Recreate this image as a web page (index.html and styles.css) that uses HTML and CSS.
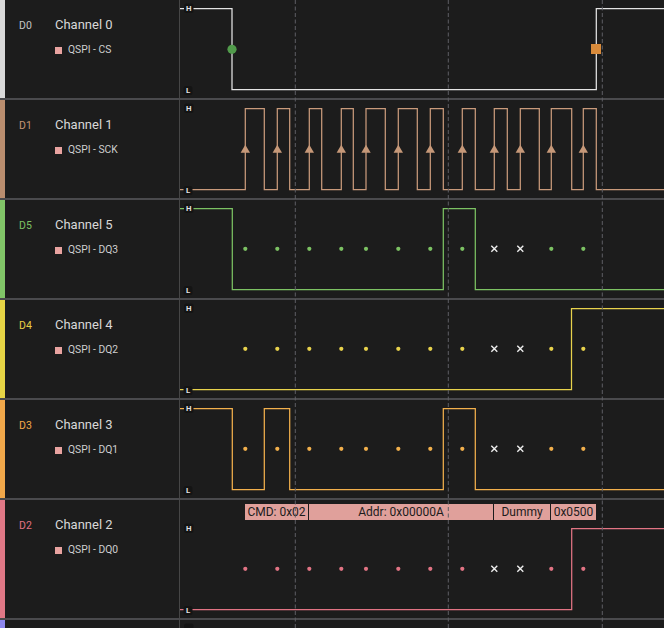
FILE: index.html
```html
<!DOCTYPE html>
<html>
<head>
<meta charset="utf-8">
<link rel="stylesheet" href="styles.css">
</head>
<body>
<div class="rows">
  <div class="row">
    <div class="info"><span class="bar c-d0"></span>
      <div class="names">
        <span class="dn t-d0">D0</span><span class="ch">Channel 0</span>
        <span></span><span class="proto"><i class="sw"></i>QSPI - CS</span>
      </div>
    </div>
    <div class="wave">
      <svg class="wv" viewBox="180 0 484 98" width="484" height="98">
        <path class="sig s-d0" d="M180 8.5 H232 V89.5 H596.3 V8.5 H664"/>
        <circle cx="232" cy="49.3" r="4.6" fill="#519b4b"/>
        <rect x="591" y="44" width="10" height="10" fill="#d98b3b"/>
        <rect class="lb" x="184" y="3.5" width="9.5" height="9.5" rx="2.5"/><text class="hl" x="188.7" y="11">H</text>
        <rect class="lb" x="183.5" y="86" width="9" height="9" rx="2.5"/><text class="hl" x="188" y="93.3">L</text>
      </svg>
    </div>
  </div>

  <div class="row">
    <div class="info"><span class="bar c-d1"></span>
      <div class="names">
        <span class="dn t-d1">D1</span><span class="ch">Channel 1</span>
        <span></span><span class="proto"><i class="sw"></i>QSPI - SCK</span>
      </div>
    </div>
    <div class="wave">
      <svg class="wv" viewBox="180 0 484 98" width="484" height="98">
        <path class="sig s-d1" d="M180 89.5 H245.3 V8.5 H264.3 V89.5 H277.3 V8.5 H289.7 V89.5 H309.3 V8.5 H321.7 V89.5 H341.3 V8.5 H353.3 V89.5 H366 V8.5 H385.3 V89.5 H398.3 V8.5 H417.3 V89.5 H430.3 V8.5 H443.3 V89.5 H462.3 V8.5 H475.3 V89.5 H494.3 V8.5 H507.3 V89.5 H520.3 V8.5 H539.3 V89.5 H551.3 V8.5 H571.7 V89.5 H583.3 V8.5 H596.3 V89.5 H664"/>
        <g class="tri">
          <polygon points="245.3,44.8 250,52.8 240.6,52.8"/>
          <polygon points="277.3,44.8 282,52.8 272.6,52.8"/>
          <polygon points="309.3,44.8 314,52.8 304.6,52.8"/>
          <polygon points="341.3,44.8 346,52.8 336.6,52.8"/>
          <polygon points="366,44.8 370.7,52.8 361.3,52.8"/>
          <polygon points="398.3,44.8 403,52.8 393.6,52.8"/>
          <polygon points="430.3,44.8 435,52.8 425.6,52.8"/>
          <polygon points="462.3,44.8 467,52.8 457.6,52.8"/>
          <polygon points="494.3,44.8 499,52.8 489.6,52.8"/>
          <polygon points="520.3,44.8 525,52.8 515.6,52.8"/>
          <polygon points="551.3,44.8 556,52.8 546.6,52.8"/>
          <polygon points="583.3,44.8 588,52.8 578.6,52.8"/>
        </g>
        <rect class="lb" x="184" y="3.5" width="9.5" height="9.5" rx="2.5"/><text class="hl" x="188.7" y="11">H</text>
        <rect class="lb" x="183.5" y="86" width="9" height="9" rx="2.5"/><text class="hl" x="188" y="93.3">L</text>
      </svg>
    </div>
  </div>

  <div class="row">
    <div class="info"><span class="bar c-d5"></span>
      <div class="names">
        <span class="dn t-d5">D5</span><span class="ch">Channel 5</span>
        <span></span><span class="proto"><i class="sw"></i>QSPI - DQ3</span>
      </div>
    </div>
    <div class="wave">
      <svg class="wv" viewBox="180 0 484 98" width="484" height="98">
        <path class="sig s-d5" d="M180 8.5 H232.3 V89.5 H443.3 V8.5 H475.3 V89.5 H664"/>
        <g class="dots f-d5">
          <circle cx="245.3" cy="48.8" r="2.1"/><circle cx="277.3" cy="48.8" r="2.1"/><circle cx="309.3" cy="48.8" r="2.1"/><circle cx="341.3" cy="48.8" r="2.1"/><circle cx="366" cy="48.8" r="2.1"/><circle cx="398.3" cy="48.8" r="2.1"/><circle cx="430.3" cy="48.8" r="2.1"/><circle cx="462.3" cy="48.8" r="2.1"/><circle cx="551.3" cy="48.8" r="2.1"/><circle cx="583.3" cy="48.8" r="2.1"/>
        </g>
        <path class="xm" d="M491.3 45.8 l6 6 M497.3 45.8 l-6 6 M517.3 45.8 l6 6 M523.3 45.8 l-6 6"/>
        <rect class="lb" x="184" y="3.5" width="9.5" height="9.5" rx="2.5"/><text class="hl" x="188.7" y="11">H</text>
        <rect class="lb" x="183.5" y="86" width="9" height="9" rx="2.5"/><text class="hl" x="188" y="93.3">L</text>
      </svg>
    </div>
  </div>

  <div class="row">
    <div class="info"><span class="bar c-d4"></span>
      <div class="names">
        <span class="dn t-d4">D4</span><span class="ch">Channel 4</span>
        <span></span><span class="proto"><i class="sw"></i>QSPI - DQ2</span>
      </div>
    </div>
    <div class="wave">
      <svg class="wv" viewBox="180 0 484 98" width="484" height="98">
        <path class="sig s-d4" d="M180 89.5 H571.5 V8.5 H664"/>
        <g class="dots f-d4">
          <circle cx="245.3" cy="48.8" r="2.1"/><circle cx="277.3" cy="48.8" r="2.1"/><circle cx="309.3" cy="48.8" r="2.1"/><circle cx="341.3" cy="48.8" r="2.1"/><circle cx="366" cy="48.8" r="2.1"/><circle cx="398.3" cy="48.8" r="2.1"/><circle cx="430.3" cy="48.8" r="2.1"/><circle cx="462.3" cy="48.8" r="2.1"/><circle cx="551.3" cy="48.8" r="2.1"/><circle cx="583.3" cy="48.8" r="2.1"/>
        </g>
        <path class="xm" d="M491.3 45.8 l6 6 M497.3 45.8 l-6 6 M517.3 45.8 l6 6 M523.3 45.8 l-6 6"/>
        <rect class="lb" x="184" y="3.5" width="9.5" height="9.5" rx="2.5"/><text class="hl" x="188.7" y="11">H</text>
        <rect class="lb" x="183.5" y="86" width="9" height="9" rx="2.5"/><text class="hl" x="188" y="93.3">L</text>
      </svg>
    </div>
  </div>

  <div class="row">
    <div class="info"><span class="bar c-d3"></span>
      <div class="names">
        <span class="dn t-d3">D3</span><span class="ch">Channel 3</span>
        <span></span><span class="proto"><i class="sw"></i>QSPI - DQ1</span>
      </div>
    </div>
    <div class="wave">
      <svg class="wv" viewBox="180 0 484 98" width="484" height="98">
        <path class="sig s-d3" d="M180 8.5 H232.3 V89.5 H264.3 V8.5 H289.7 V89.5 H443.3 V8.5 H475.3 V89.5 H664"/>
        <g class="dots f-d3">
          <circle cx="245.3" cy="48.8" r="2.1"/><circle cx="277.3" cy="48.8" r="2.1"/><circle cx="309.3" cy="48.8" r="2.1"/><circle cx="341.3" cy="48.8" r="2.1"/><circle cx="366" cy="48.8" r="2.1"/><circle cx="398.3" cy="48.8" r="2.1"/><circle cx="430.3" cy="48.8" r="2.1"/><circle cx="462.3" cy="48.8" r="2.1"/><circle cx="551.3" cy="48.8" r="2.1"/><circle cx="583.3" cy="48.8" r="2.1"/>
        </g>
        <path class="xm" d="M491.3 45.8 l6 6 M497.3 45.8 l-6 6 M517.3 45.8 l6 6 M523.3 45.8 l-6 6"/>
        <rect class="lb" x="184" y="3.5" width="9.5" height="9.5" rx="2.5"/><text class="hl" x="188.7" y="11">H</text>
        <rect class="lb" x="183.5" y="86" width="9" height="9" rx="2.5"/><text class="hl" x="188" y="93.3">L</text>
      </svg>
    </div>
  </div>

  <div class="row tall">
    <div class="info"><span class="bar c-d2"></span>
      <div class="names">
        <span class="dn t-d2">D2</span><span class="ch">Channel 2</span>
        <span></span><span class="proto"><i class="sw"></i>QSPI - DQ0</span>
      </div>
    </div>
    <div class="wave">
      <div class="anno">
        <span class="seg w-cmd">CMD: 0x02</span>
        <span class="seg w-addr">Addr: 0x00000A</span>
        <span class="seg w-dummy">Dummy</span>
        <span class="seg w-data">0x0500</span>
      </div>
      <svg class="wv" viewBox="180 0 484 98" width="484" height="98">
        <path class="sig s-d2" d="M180 89.5 H571.7 V8.5 H664"/>
        <g class="dots f-d2">
          <circle cx="245.3" cy="48.8" r="2.1"/><circle cx="277.3" cy="48.8" r="2.1"/><circle cx="309.3" cy="48.8" r="2.1"/><circle cx="341.3" cy="48.8" r="2.1"/><circle cx="366" cy="48.8" r="2.1"/><circle cx="398.3" cy="48.8" r="2.1"/><circle cx="430.3" cy="48.8" r="2.1"/><circle cx="462.3" cy="48.8" r="2.1"/><circle cx="551.3" cy="48.8" r="2.1"/><circle cx="583.3" cy="48.8" r="2.1"/>
        </g>
        <path class="xm" d="M491.3 45.8 l6 6 M497.3 45.8 l-6 6 M517.3 45.8 l6 6 M523.3 45.8 l-6 6"/>
        <rect class="lb" x="184" y="3.5" width="9.5" height="9.5" rx="2.5"/><text class="hl" x="188.7" y="11">H</text>
        <rect class="lb" x="183.5" y="86" width="9" height="9" rx="2.5"/><text class="hl" x="188" y="93.3">L</text>
      </svg>
    </div>
  </div>

  <div class="row short">
    <div class="info"><span class="bar c-d6"></span></div>
    <div class="wave">
      <svg class="wv" viewBox="180 0 484 8" width="484" height="8">
        <rect class="lb" x="184" y="3.5" width="9.5" height="9.5" rx="2.5"/>
      </svg>
    </div>
  </div>

  <svg class="cursors" viewBox="180 0 484 628" width="484" height="628">
    <path d="M295.3 0 V628 M448.3 0 V628 M602.3 0 V628"/>
  </svg>
</div>
</body>
</html>
```

FILE: styles.css
```css
html, body {
  margin: 0;
  padding: 0;
  background: #1c1c1c;
  overflow: hidden;
  height: 628px;
}
body {
  font-family: Roboto, "Liberation Sans", sans-serif;
  color: #d6d6d6;
}
.rows {
  position: relative;
  width: 664px;
  height: 628px;
  overflow: hidden;
}
.row {
  display: flex;
  height: 98px;
  border-bottom: 2px solid #4a4a4d;
}
.row.tall {
  height: 118px;
}
.row.short {
  height: 8px;
  border-bottom: 0;
}
.info {
  width: 179px;
  border-right: 1px solid #464646;
  display: flex;
  flex-shrink: 0;
}
.bar {
  width: 5px;
  flex-shrink: 0;
}
.names {
  display: grid;
  grid-template-columns: 36px auto;
  align-content: start;
  align-items: baseline;
  padding-left: 14px;
  padding-top: 17px;
}
.dn {
  font-size: 10.5px;
  line-height: 16px;
}
.ch {
  font-size: 13px;
  line-height: 16px;
  color: #d8d8d8;
}
.proto {
  display: flex;
  align-items: center;
  gap: 6px;
  margin-top: 9px;
  font-size: 10.3px;
  line-height: 14px;
  color: #cfcfcf;
}
.sw {
  display: block;
  width: 7px;
  height: 7px;
  background: #e8a3a0;
}
.wave {
  flex: 1;
  display: flex;
  flex-direction: column;
  overflow: hidden;
}
.wv {
  display: block;
  flex-shrink: 0;
}
.anno {
  display: flex;
  gap: 1px;
  margin-top: 4px;
  margin-left: 65px;
  height: 16px;
}
.seg {
  background: #e0a09b;
  color: #1c1c1c;
  font-size: 12px;
  line-height: 16px;
  text-align: center;
  white-space: nowrap;
  overflow: hidden;
}
.w-cmd { width: 63px; }
.w-addr { width: 184px; }
.w-dummy { width: 56px; }
.w-data { width: 45px; }

.sig {
  fill: none;
  stroke-width: 1.25;
}
.lb { fill: #141414; }
.hl {
  font-family: Roboto, "Liberation Sans", sans-serif;
  font-size: 7.8px;
  font-weight: 700;
  fill: #e2e2e2;
  text-anchor: middle;
}
.tri { fill: #c69878; }
.xm {
  stroke: #ececec;
  stroke-width: 1.4;
  fill: none;
}
.cursors {
  position: absolute;
  left: 180px;
  top: 0;
  pointer-events: none;
}
.cursors path {
  stroke: #5e5e64;
  stroke-width: 1;
  stroke-dasharray: 4 2.5;
  fill: none;
}

.c-d0 { background: #d9d9d9; }
.c-d1 { background: #b98d6e; }
.c-d5 { background: #80c467; }
.c-d4 { background: #e6d445; }
.c-d3 { background: #f1a84a; }
.c-d2 { background: #e07886; }
.c-d6 { background: #8d87ee; }

.t-d0 { color: #c4c4c4; }
.t-d1 { color: #c39474; }
.t-d5 { color: #7cc063; }
.t-d4 { color: #e6cf45; }
.t-d3 { color: #f0a648; }
.t-d2 { color: #e07282; }

.s-d0 { stroke: #e4e4e4; }
.s-d1 { stroke: #c99a7b; }
.s-d5 { stroke: #7cc263; }
.s-d4 { stroke: #e8d24c; }
.s-d3 { stroke: #f2b04c; }
.s-d2 { stroke: #e27484; }

.f-d5 { fill: #7cc263; }
.f-d4 { fill: #e8d24c; }
.f-d3 { fill: #f2b04c; }
.f-d2 { fill: #e27484; }
```
